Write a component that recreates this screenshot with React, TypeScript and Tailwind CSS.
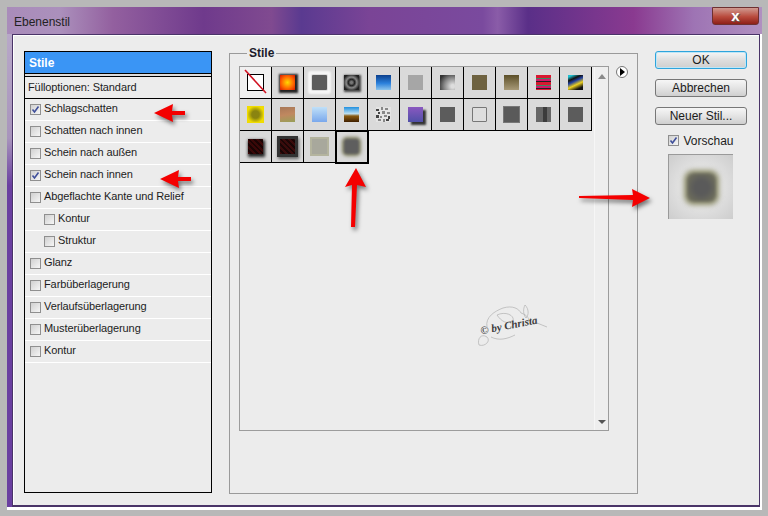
import React from "react";

const rows = [
  { label: "Schlagschatten", checked: true },
  { label: "Schatten nach innen" },
  { label: "Schein nach außen" },
  { label: "Schein nach innen", checked: true },
  { label: "Abgeflachte Kante und Relief" },
  { label: "Kontur", sub: true },
  { label: "Struktur", sub: true },
  { label: "Glanz" },
  { label: "Farbüberlagerung" },
  { label: "Verlaufsüberlagerung" },
  { label: "Musterüberlagerung" },
  { label: "Kontur" },
];

const noise = [
  [0, 2, 3, 2], [5, 0, 2, 3], [9, 1, 3, 2], [2, 5, 2, 2], [6, 4, 3, 3], [11, 5, 3, 2],
  [0, 8, 3, 3], [4, 9, 2, 2], [8, 8, 3, 2], [12, 9, 2, 3], [2, 12, 3, 2], [7, 12, 2, 3], [10, 12, 3, 2],
];

function Check({ checked }: { checked?: boolean }) {
  return (
    <span className="w-[11px] h-[11px] shrink-0 border border-[#8f8f8f] bg-[linear-gradient(135deg,#d0d0d0,#f6f6f6)] flex items-center justify-center">
      {checked && (
        <svg width="9" height="9" viewBox="0 0 9 9">
          <path d="M1.5 4.5 L3.5 7 L7.5 1.5" fill="none" stroke="#3f4f9a" strokeWidth="1.6" />
        </svg>
      )}
    </span>
  );
}

function Arrow({ className, w, h, d }: { className: string; w: number; h: number; d: string }) {
  return (
    <svg className={`absolute ${className} drop-shadow-[2px_3px_2px_rgba(0,0,0,0.5)]`} width={w} height={h} viewBox={`0 0 ${w} ${h}`}>
      <path d={d} fill="#f40000" />
    </svg>
  );
}

function Swatch({ className = "", selected = false, light = false, children }: { className?: string; selected?: boolean; light?: boolean; children?: React.ReactNode }) {
  return (
    <div className={`w-[32px] h-[32px] border-r border-b border-black flex items-center justify-center ${light ? "bg-[#f0f0f0]" : "bg-[#dadada]"} ${selected ? "outline-2 outline-black -outline-offset-1 relative" : ""}`}>
      {children ?? <div className={`w-[15px] h-[15px] ${className}`} />}
    </div>
  );
}

const arrowLeft = "M2 11 L21 2 L20 9 L33 9 L33 13 L20 13 L21 20 Z";

export default function App() {
  return (
    <div className="relative w-[768px] h-[516px] bg-[#b8b8b8] pt-[7px] pr-[6px] pb-[6px] pl-[7px] overflow-hidden font-['Liberation_Sans',sans-serif] text-[#1c1c1c]">
      <div className="h-full flex flex-col bg-[linear-gradient(90deg,#a98cba_0%,#ab90bc_7%,#93609f_14%,#6f3a8c_26%,#804a90_35%,#5a3a90_39%,#7a4496_48%,#7a4a9e_63%,#8a5ca8_65%,#5a2f88_69%,#8a3a90_83%,#9e74b4_91%,#b090c0_100%)]">
        <div className="h-[27px] shrink-0 flex items-center justify-between pl-[7px] pr-[3px]">
          <span className="text-[12px] text-[#222] pt-[2px]">Ebenenstil</span>
          <div className="w-[47px] h-[18px] -mt-[9px] rounded-b-[3px] border border-[#6e3030] bg-[linear-gradient(180deg,#d09a90,#b94a3c_55%,#8e2018)] flex items-center justify-center">
            <span className="text-white text-[15px] font-bold leading-none -mt-[2px] [text-shadow:1px_1px_0_#666]">x</span>
          </div>
        </div>
        <div className="flex-1 flex min-h-0 border-r-2 border-b-[3px] border-white">
          <div className="w-[5px] shrink-0 bg-[linear-gradient(180deg,#b8a8c8,#a894bc_22%,#6a3fa0_32%,#6a3fa0_100%)]" />
          <div className="flex-1 bg-[#ececec] border border-[#4a3468] border-b-2 shadow-[inset_1px_1px_0_#fff] flex pt-[16px] pl-[11px]">
            {/* Left list */}
            <div className="w-[188px] h-[442px] border border-black flex flex-col shrink-0">
              <div className="h-[22px] bg-[#3a95f5] text-white font-bold text-[12px] flex items-center pl-[4px] border-b border-black shrink-0">Stile</div>
              <div className="h-[2px] bg-[#dcdcdc] shrink-0" />
              <div className="h-[23px] border-t border-b border-black flex items-center pl-[3px] text-[11px] tracking-[-0.1px] pb-[1px] shrink-0">Fülloptionen: Standard</div>
              {rows.map((r, i) => (
                <div key={i} className={`h-[22px] shrink-0 border-b border-white flex items-center gap-[3px] text-[11px] tracking-[-0.1px] ${r.sub ? "pl-[19px]" : "pl-[5px]"}`}>
                  <Check checked={r.checked} />
                  <span className="pb-[3px]">{r.label}</span>
                </div>
              ))}
            </div>

            {/* Stile group */}
            <div className="ml-[17px] w-[409px] h-[441px] mt-[2px] border border-[#9a9a9a] shrink-0 relative pt-[12px] pl-[9px]">
              <span className="absolute -top-[8px] left-[17px] px-[2px] bg-[#ececec] text-[12px] font-bold text-[#1a1a2a] leading-[14px]">Stile</span>
              <div className="w-[370px] h-[365px] border border-[#9c9c9c] flex">
                <div className="flex-1 flex flex-col">
                  <div className="flex">
                    <Swatch light>
                      <div className="w-[17px] h-[17px] border border-black bg-white relative">
                        <svg className="absolute -left-[4px] -top-[6px]" width="24" height="26" viewBox="0 0 24 26">
                          <path d="M1 1 L22 24" stroke="#d01020" strokeWidth="1.6" />
                        </svg>
                      </div>
                    </Swatch>
                    <Swatch className="bg-[radial-gradient(circle,#ffd800,#ff6a00_55%,#d81800)] shadow-[1px_1px_2px_2px_#222]" />
                    <Swatch className="bg-[#5c5c5c] rounded-[1px] shadow-[0_0_0_1px_#ddd,0_0_2px_4px_#f6f6f6]" />
                    <Swatch className="bg-[radial-gradient(circle,#777_10%,#222_30%,#888_50%,#222_80%)] shadow-[1px_1px_2px_1px_#444]" />
                    <Swatch className="bg-[linear-gradient(180deg,#0c3f8c,#2a80dc_55%,#8cc4ec)]" />
                    <Swatch className="bg-[#a6a6a6]" />
                    <Swatch className="bg-[radial-gradient(circle_at_85%_75%,#ddd_10%,#888_50%,#333_85%)]" />
                    <Swatch className="bg-[#6e6240]" />
                    <Swatch className="bg-[linear-gradient(180deg,#5c4f28,#a89a78)]" />
                    <Swatch className="bg-[repeating-linear-gradient(180deg,#d81830_0,#d81830_3px,#3a8a60_3px,#3a8a60_4px,#d0186a_4px,#d0186a_6px,#222_6px,#222_7px)]" />
                    <Swatch className="bg-[linear-gradient(155deg,#20c0d0_10%,#111_28%,#2040a0_42%,#ecd020_62%,#111_85%)]" />
                  </div>
                  <div className="flex">
                    <Swatch className="bg-[radial-gradient(circle,#8a8410_35%,#f0dc00_80%)] shadow-[0_0_0_1px_#f0dc00]" />
                    <Swatch className="bg-[linear-gradient(170deg,#a87858,#c08860_50%,#98a058)]" />
                    <Swatch className="bg-[linear-gradient(180deg,#c0e0f8,#7aa8ec)]" />
                    <Swatch className="bg-[linear-gradient(180deg,#2090e0,#bfe0f0_45%,#8a5a10_60%,#402000)]" />
                    <Swatch>
                      <svg width="15" height="15" viewBox="0 0 15 15">
                        <rect width="15" height="15" fill="#e4e4e4" />
                        {noise.map((n, i) => (
                          <rect key={i} x={n[0]} y={n[1]} width={n[2]} height={n[3]} fill={i % 3 === 0 ? "#444" : "#888"} />
                        ))}
                      </svg>
                    </Swatch>
                    <Swatch className="bg-[linear-gradient(180deg,#8a58c0,#5050a8)] shadow-[3px_3px_2px_#333]" />
                    <Swatch className="bg-[#5c5c5c]" />
                    <Swatch className="border border-[#777] rounded-[1px] bg-[#dedede]" />
                    <Swatch className="bg-[#5a5a5a] shadow-[0_0_0_1px_#777]" />
                    <Swatch className="bg-[linear-gradient(90deg,#666_50%,#3c3c3c_50%,#3c3c3c_75%,#666_75%)]" />
                    <Swatch className="bg-[#5c5c5c]" />
                  </div>
                  <div className="flex">
                    <Swatch className="bg-[repeating-linear-gradient(45deg,#3a0808_0,#3a0808_2px,#1a0404_2px,#1a0404_4px)] shadow-[1px_2px_3px_1px_#222]" />
                    <Swatch className="bg-[repeating-linear-gradient(45deg,#3a0c0c_0,#3a0c0c_2px,#1a0606_2px,#1a0606_4px)] shadow-[0_0_0_3px_#333,1px_2px_3px_3px_#666]" />
                    <Swatch className="bg-[#a8a89c] shadow-[0_0_0_2px_#b4b49e]" />
                    <Swatch selected>
                      <div className="w-[15px] h-[15px] rounded-[3px] bg-[#5e5e5e] blur-[1px] shadow-[0_0_3px_2px_#7c7c5c]" />
                    </Swatch>
                  </div>
                </div>
                <div className="w-[14px] border-l border-[#f6f6f6] flex flex-col items-center justify-between pt-[7px] pb-[6px] bg-[#eeeeee]">
                  <span className="w-0 h-0 border-x-[4px] border-x-transparent border-b-[5px] border-b-[#8a8a8a]" />
                  <span className="w-0 h-0 border-x-[4px] border-x-transparent border-t-[4px] border-t-[#555]" />
                </div>
              </div>
              <div className="absolute left-[386px] top-[12px] w-[12px] h-[12px] rounded-full border border-[#777] bg-white flex items-center justify-center">
                <span className="w-0 h-0 ml-[1px] border-y-[4px] border-y-transparent border-l-[5px] border-l-black" />
              </div>
              {/* Watermark */}
              <div className="absolute left-[247px] top-[249px] w-[78px] h-[46px]">
                <svg className="absolute inset-0" width="78" height="46" viewBox="0 0 78 46">
                  <g fill="none" stroke="#b0b0b0" strokeWidth="0.7">
                    <path d="M10 24 C8 14 18 8 26 5 C36 2 42 6 44 10 C50 12 54 16 50 20" />
                    <path d="M20 12 C28 8 38 12 36 18 C30 22 24 18 20 12" />
                    <path d="M2 42 C0 36 4 30 10 34 C14 38 8 44 2 42" />
                    <path d="M14 34 C22 38 30 36 38 32" />
                    <path d="M48 2 C52 6 52 12 49 15 C46 11 46 6 48 2" />
                    <path d="M60 20 L70 24" />
                  </g>
                </svg>
                <span className="absolute left-[3px] top-[14px] text-[11px] italic font-bold font-['Liberation_Serif',serif] text-[#3c3c3c] whitespace-nowrap -rotate-[11deg]">© by Christa</span>
              </div>
            </div>

            {/* Right */}
            <div className="ml-[17px] w-[92px] shrink-0 flex flex-col items-center">
              <button className="w-[92px] h-[18px] rounded-[3px] border border-[#2ea4dc] bg-[linear-gradient(180deg,#f6f6f6,#dcdcdc_55%,#cfcfcf)] text-[12px] leading-none shadow-[inset_0_0_0_1px_#bfe6f6]">OK</button>
              <button className="w-[92px] h-[18px] mt-[10px] rounded-[3px] border border-[#777] bg-[linear-gradient(180deg,#f6f6f6,#e4e4e4_50%,#cfcfcf)] text-[12px] leading-none">Abbrechen</button>
              <button className="w-[92px] h-[18px] mt-[10px] rounded-[3px] border border-[#777] bg-[linear-gradient(180deg,#f6f6f6,#e4e4e4_50%,#cfcfcf)] text-[12px] leading-none">Neuer Stil...</button>
              <label className="mt-[9px] h-[13px] flex items-center gap-[4px] text-[12px]">
                <Check checked />
                Vorschau
              </label>
              <div className="mt-[7px] -ml-[1px] w-[65px] h-[65px] border-l border-t border-[#9a9a9a] flex items-center justify-center bg-[radial-gradient(circle,#e2e2e2_45%,#cdcdcd_100%)]">
                <div className="w-[29px] h-[29px] rounded-[6px] bg-[radial-gradient(circle,#5a5a5a_35%,#70705c_85%)] blur-[1.5px] shadow-[0_0_4px_3px_#90906c]" />
              </div>
            </div>
          </div>
        </div>
      </div>

      {/* Callout arrows */}
      <Arrow className="left-[152px] top-[102px]" w={36} h={22} d={arrowLeft} />
      <Arrow className="left-[158px] top-[168px]" w={36} h={22} d={arrowLeft} />
      <Arrow className="left-[342px] top-[166px]" w={26} h={64} d="M14 2 L3 21 L10 19 L9 61 L13 61 L15 19 L24 21 Z" />
      <Arrow className="left-[577px] top-[186px]" w={76} h={24} d="M2 10 L56 9 L55 3 L73 12 L55 21 L56 14 L2 12 Z" />
    </div>
  );
}
